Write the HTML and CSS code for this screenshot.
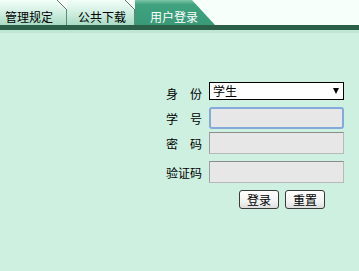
FILE: index.html
```html
<!DOCTYPE html>
<html lang="zh-CN">
<head>
<meta charset="utf-8">
<title>用户登录</title>
<link rel="stylesheet" href="styles.css">
</head>
<body>
<div class="header">
  <div class="tabs">
    <div class="tab tab-1">管理规定</div>
    <div class="tab tab-2">公共下载</div>
    <div class="tab tab-active">用户登录</div>
  </div>
  <div class="bar"></div>
  <div class="strip"></div>
</div>
<div class="form">
  <div class="label">身 份</div>
  <div class="field">
    <div class="select-wrap">
      <select class="select"><option>学生</option></select>
      <span class="arrow"></span>
    </div>
  </div>
  <div class="label">学 号</div>
  <div class="field"><input class="input focused" type="text"></div>
  <div class="label">密 码</div>
  <div class="field"><input class="input" type="password"></div>
  <div class="label">验证码</div>
  <div class="field"><input class="input" type="text"></div>
  <div></div>
  <div class="buttons">
    <button class="btn">登录</button>
    <button class="btn">重置</button>
  </div>
</div>
</body>
</html>
```
FILE: styles.css
```css
html, body {
  margin: 0;
  padding: 0;
}
body {
  width: 359px;
  height: 271px;
  background: #cdf0e0;
  font-family: "Noto Sans CJK SC", "DejaVu Sans", sans-serif;
  font-size: 12px;
  color: #000;
  overflow: hidden;
}
.header {
  background: #f7fffb;
}
.tabs {
  display: flex;
  height: 25px;
  align-items: stretch;
}
.tab {
  position: relative;
  box-sizing: border-box;
  font-size: 12px;
  line-height: 12px;
  padding-top: 11px;
  white-space: nowrap;
}
.tab-1, .tab-2 {
  background: linear-gradient(to bottom, #f2fff8 0%, #d8f2e6 40%, #a9dcc5 100%);
  border-right: 1px solid #5f8a78;
}
.tab-1::after, .tab-2::after {
  content: "";
  position: absolute;
  top: 0;
  right: -1px;
  width: 10px;
  height: 10px;
  background: linear-gradient(to top right, transparent calc(50% - 0.7px), #6d6d6d 50%, #f7fffb calc(50% + 0.7px));
}
.tab-1 {
  width: 67px;
  padding-left: 5px;
}
.tab-2 {
  width: 68px;
  padding-left: 11px;
}
.tab-active {
  width: 80px;
  padding-left: 15px;
  color: #fff;
  background: linear-gradient(to bottom, #7cc6a8 0%, #40a27f 18%, #3a9a78 100%);
  clip-path: polygon(0 0, 57px 0, 80px 100%, 0 100%);
}
.bar {
  height: 5px;
  background: #2c5f48;
}
.strip {
  height: 3px;
  background: #bfe7d3;
}
.form {
  display: grid;
  grid-template-columns: 43px 135px;
  grid-template-rows: 25px 25px 29px 29px auto;
  margin: 49px 0 0 166px;
}
.label {
  width: 36px;
  text-align: justify;
  text-align-last: justify;
  line-height: 14px;
  padding-top: 5px;
}
.field {
  display: flex;
}
.select-wrap {
  position: relative;
  width: 135px;
  height: 18px;
}
.select {
  appearance: none;
  -webkit-appearance: none;
  box-sizing: border-box;
  width: 135px;
  height: 18px;
  margin: 0;
  padding: 0 0 0 3px;
  border: 1px solid #000;
  border-radius: 0;
  background: #fff;
  font-family: inherit;
  font-size: 12px;
  line-height: 16px;
  color: #000;
}
.arrow {
  position: absolute;
  right: 5px;
  top: 6px;
  width: 0;
  height: 0;
  border-left: 3.5px solid transparent;
  border-right: 3.5px solid transparent;
  border-top: 6px solid #000;
  pointer-events: none;
}
.input {
  box-sizing: border-box;
  width: 135px;
  height: 22px;
  margin: 0;
  padding: 0 3px;
  background: #e7e7e7;
  border: 1px solid #b9b9b9;
  border-top-color: #8c8c8c;
  border-left-color: #a0a0a0;
  border-radius: 0;
  font-family: inherit;
  font-size: 12px;
  outline: none;
}
.input.focused {
  border: 2px solid #86a9dc;
  border-radius: 3px;
}
.buttons {
  display: flex;
  gap: 6px;
  padding-left: 30px;
}
.btn {
  box-sizing: border-box;
  width: 40px;
  height: 19px;
  margin: 0;
  padding: 0;
  border: 1px solid #3a3a3a;
  border-radius: 3px;
  background: linear-gradient(to bottom, #ffffff 0%, #f3f3f3 60%, #dedede 100%);
  font-family: inherit;
  font-size: 12px;
  line-height: 16px;
  color: #000;
}
```
